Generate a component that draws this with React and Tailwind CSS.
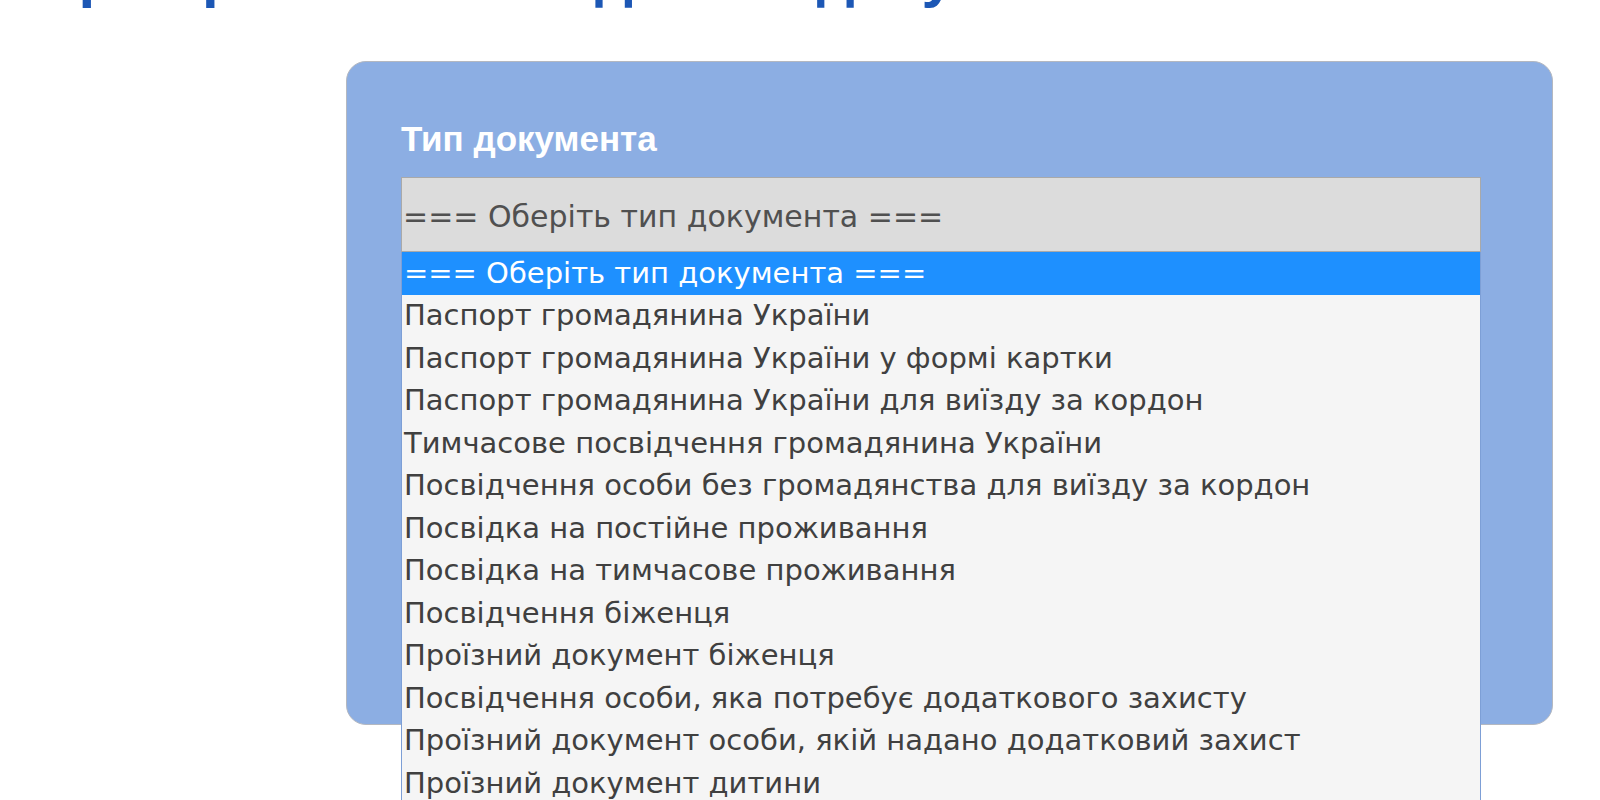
const OPTIONS = [
  "=== Оберіть тип документа ===",
  "Паспорт громадянина України",
  "Паспорт громадянина України у формі картки",
  "Паспорт громадянина України для виїзду за кордон",
  "Тимчасове посвідчення громадянина України",
  "Посвідчення особи без громадянства для виїзду за кордон",
  "Посвідка на постійне проживання",
  "Посвідка на тимчасове проживання",
  "Посвідчення біженця",
  "Проїзний документ біженця",
  "Посвідчення особи, яка потребує додаткового захисту",
  "Проїзний документ особи, якій надано додатковий захист",
  "Проїзний документ дитини",
  "Посвідчення водія",
];

function App() {
  const selected = 0;

  return (
    <div className="h-screen w-full overflow-hidden bg-white font-['Liberation_Sans',Arial,sans-serif]">
      {/* Page title, scrolled mostly out of view */}
      <h1 className="-mt-[54px] pl-[2px] text-[60px] leading-none font-bold text-[#1c57b5] whitespace-nowrap">
        Перевірка чинності даного документа
      </h1>

      {/* Form card */}
      <section className="relative ml-[346px] mt-[55px] w-[1207px] h-[664px] rounded-[20px] border border-[#b4b8c0] bg-[#8caee3] pt-[59px] pl-[54px]">
        <label className="block text-[35px] leading-none font-bold text-white">
          Тип документа
        </label>

        {/* Select with open dropdown */}
        <div className="relative mt-[21px] w-[1080px] font-['DejaVu_Sans',Verdana,sans-serif]">
          <div className="flex h-[75px] items-center border border-[#a9a9a9] bg-[#dcdcdc] pl-[1px] pt-[4px] text-[30px] text-[#505050]">
            === Оберіть тип документа ===
          </div>
          <ul className="absolute left-0 top-full z-10 w-full border-x border-[#7d9fd6] bg-[#f5f5f5]">
            {OPTIONS.map((opt, i) => (
              <li
                key={opt}
                className={`flex h-[42.5px] items-center whitespace-nowrap pl-[2px] text-[29px] ${
                  i === selected ? "bg-[#1e90ff] text-white" : "text-[#404040]"
                }`}
              >
                {opt}
              </li>
            ))}
          </ul>
        </div>
      </section>
    </div>
  );
}

export default App;
